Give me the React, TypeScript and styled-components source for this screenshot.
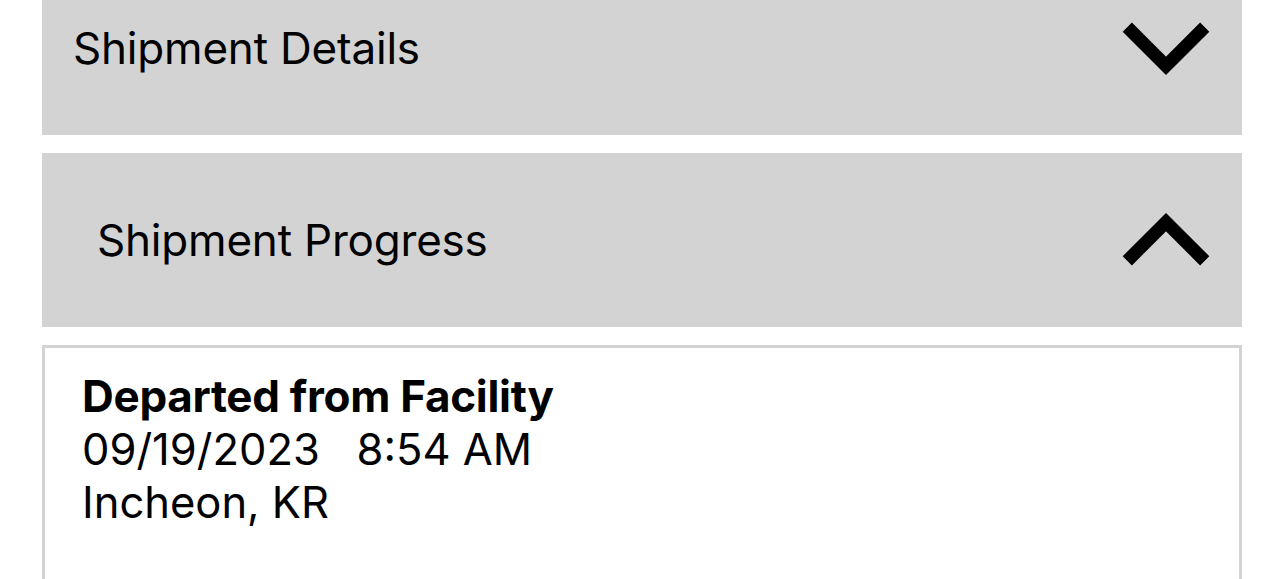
import React from "react";
import styled, { createGlobalStyle } from "styled-components";

const GlobalStyle = createGlobalStyle`
    html, body {
        margin: 0;
        padding: 0;
        background: #ffffff;
        overflow: hidden;
    }
    body {
        font-family: Inter, "Noto Sans", "Liberation Sans", sans-serif;
        color: #000000;
    }
`;

const Page = styled.div`
    display: flex;
    flex-direction: column;
    gap: 18px;
    margin: -39px 42px 0 42px;
`;

const SectionHeader = styled.div<{ indent: number }>`
    display: flex;
    align-items: center;
    justify-content: space-between;
    height: 174px;
    padding: 0 32px 0 ${props => props.indent}px;
    background-color: #d3d3d3;
    cursor: pointer;
`;

const SectionTitle = styled.span`
    font-size: 44px;
    font-weight: 400;
    letter-spacing: -0.2px;
`;

const Chevron = styled.svg<{ up?: boolean }>`
    width: 88px;
    height: 54px;
    display: block;
    transform: ${props => (props.up ? "none" : "rotate(180deg)")};
`;

const Card = styled.div`
    min-height: 280px;
    border: 3px solid #d3d3d3;
    padding: 22px 37px;
    background: #ffffff;
`;

const EventTitle = styled.div`
    font-size: 44px;
    font-weight: 700;
    line-height: 53px;
    letter-spacing: -0.3px;
`;

const EventLine = styled.div`
    font-size: 43.5px;
    font-weight: 400;
    line-height: 53px;
    white-space: pre;
`;

function ChevronIcon({ up }: { up?: boolean }) {
    return (
        <Chevron up={up} viewBox="0 0 88 54">
            <polyline
                points="5.3,47.8 44,9.2 82.7,47.8"
                fill="none"
                stroke="#000"
                strokeWidth={13}
                strokeLinecap="butt"
                strokeLinejoin="miter"
            />
        </Chevron>
    );
}

export default function App() {
    return (
        <>
            <GlobalStyle />
            <Page>
                <SectionHeader indent={31}>
                    <SectionTitle>Shipment Details</SectionTitle>
                    <ChevronIcon />
                </SectionHeader>
                <SectionHeader indent={55}>
                    <SectionTitle>Shipment Progress</SectionTitle>
                    <ChevronIcon up />
                </SectionHeader>
                <Card>
                    <EventTitle>Departed from Facility</EventTitle>
                    <EventLine>{"09/19/2023   8:54 AM"}</EventLine>
                    <EventLine>Incheon, KR</EventLine>
                </Card>
            </Page>
        </>
    );
}
